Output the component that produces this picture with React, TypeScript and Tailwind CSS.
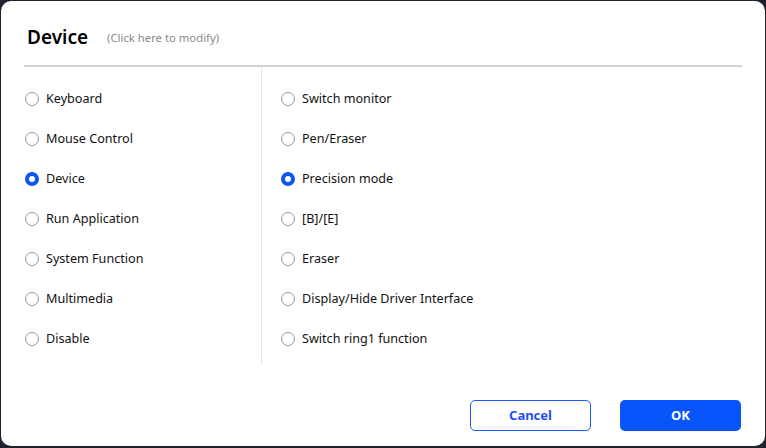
import React from "react";

const leftItems = ["Keyboard", "Mouse Control", "Device", "Run Application", "System Function", "Multimedia", "Disable"];
const rightItems = ["Switch monitor", "Pen/Eraser", "Precision mode", "[B]/[E]", "Eraser", "Display/Hide Driver Interface", "Switch ring1 function"];

function Radio({ label, checked }: { label: string; checked?: boolean }) {
  return (
    <div className="flex h-[40px] items-center">
      {checked ? (
        <span className="box-border h-[14px] w-[14px] rounded-full border-[4px] border-[#0d55f5] bg-white" />
      ) : (
        <span className="box-border h-[14px] w-[14px] rounded-full border border-[#9a9a9a] bg-white" />
      )}
      <span className="ml-[7px] text-[12.6px] text-[#111]">{label}</span>
    </div>
  );
}

export default function App() {
  return (
    <div
      className="h-[448px] w-[766px] bg-[#1e222d] pb-[2px] pl-[1px] pr-[1px] pt-[1px]"
      style={{ fontFamily: '"Noto Sans", "Open Sans", sans-serif' }}
    >
      <div className="flex h-full flex-col rounded-[10px] bg-white">
        <div className="flex h-[64px] items-end px-[26px] pb-[18px]">
          <span className="text-[19px] font-semibold leading-none text-black">Device</span>
          <span className="mb-[4px] ml-[19px] text-[11.3px] leading-none text-[#8a8a8a]">(Click here to modify)</span>
        </div>
        <div className="mx-[23px] h-[2px] bg-[#d2d2d2]" />
        <div className="flex">
          <div className="w-[260px] pl-[24px] pt-[12px]">
            {leftItems.map((t) => (
              <Radio key={t} label={t} checked={t === "Device"} />
            ))}
          </div>
          <div className="h-[298px] w-[1px] bg-[#e6e6e6]" />
          <div className="pl-[19px] pt-[12px]">
            {rightItems.map((t) => (
              <Radio key={t} label={t} checked={t === "Precision mode"} />
            ))}
          </div>
        </div>
        <div className="mt-auto flex justify-end gap-[29px] pb-[15px] pr-[24px]">
          <button className="h-[31px] w-[121px] rounded-[5px] border border-[#1a5cff] bg-white text-[13px] font-bold text-[#1a4ff5]">
            Cancel
          </button>
          <button className="h-[31px] w-[121px] rounded-[5px] bg-[#0a54fb] text-[13px] font-bold text-white">
            OK
          </button>
        </div>
      </div>
    </div>
  );
}
